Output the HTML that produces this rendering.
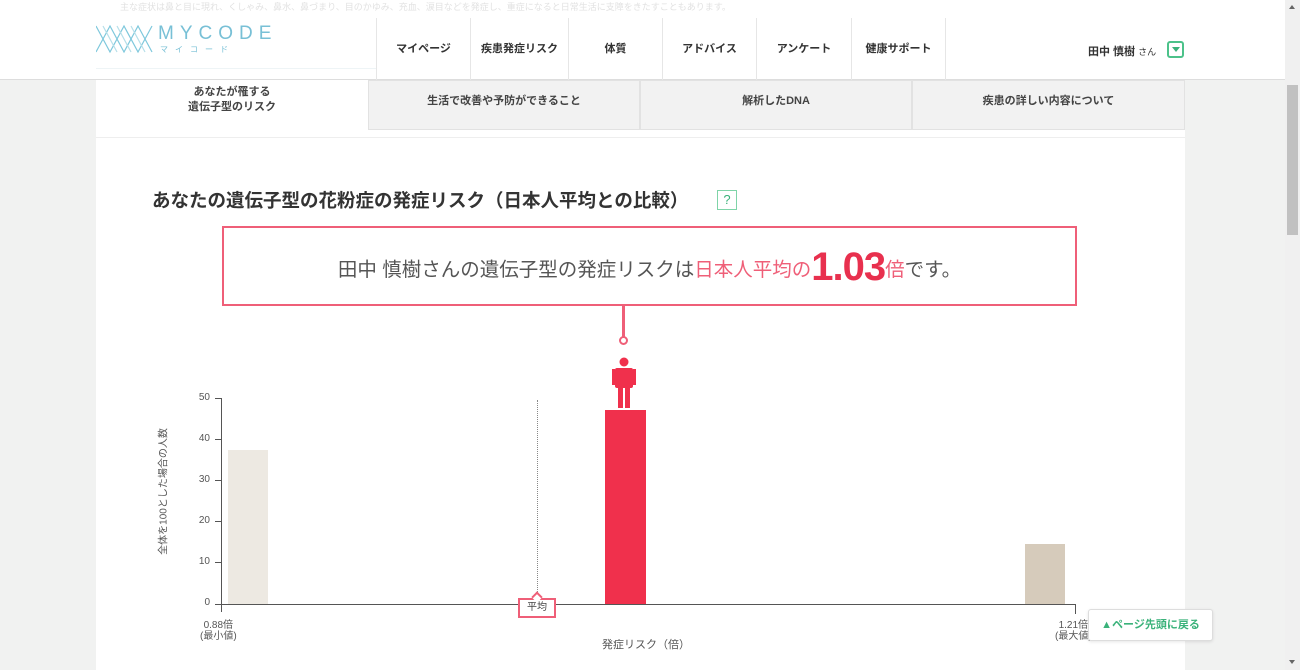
<!DOCTYPE html>
<html><head><meta charset="utf-8"><style>
*{margin:0;padding:0;box-sizing:border-box}
body{width:1300px;height:670px;overflow:hidden;background:#f1f2f1;font-family:"Liberation Sans","Noto Sans CJK JP",sans-serif;position:relative;color:#333}
.a{position:absolute}
.nav{top:18px;height:62px;border-left:1px solid #e6e6e6;font-size:11px;font-weight:bold;color:#333;display:flex;align-items:center;justify-content:center;padding-bottom:2px}
.tab{top:80px;height:50px;background:#f2f2f2;border:1px solid #e2e2e2;font-size:11px;font-weight:bold;color:#444;text-align:center;padding-top:11px}
.yl{font-size:10px;color:#555;width:20px;text-align:right}
.tk{width:6px;height:1px;background:#555;left:215px}
</style></head><body>
<div class="a" style="left:0;top:0;width:1285px;height:670px;background:#f1f2f1"></div>
<div class="a" style="left:96px;top:80px;width:1089px;height:590px;background:#fff"></div>
<!-- header -->
<div class="a" style="left:0;top:0;width:1285px;height:80px;background:#fff;border-bottom:1px solid #ddd"></div>
<div class="a" style="left:120px;top:0;font-size:9px;color:#e2e2e2;white-space:nowrap">主な症状は鼻と目に現れ、くしゃみ、鼻水、鼻づまり、目のかゆみ、充血、涙目などを発症し、重症になると日常生活に支障をきたすこともあります。</div>
<svg class="a" style="left:96px;top:24px" width="60" height="30" viewBox="0 0 60 30"><g fill="none" stroke="#7ec8dc" stroke-width="1.2"><path d="M0 2 L14 28 L28 2 L42 28 L56 2"/><path d="M0 28 L14 2 L28 28 L42 2 L56 28"/><path d="M7 2 L21 28 M21 2 L35 28 M35 2 L49 28" stroke="#b6dfe9"/></g></svg>
<div class="a" style="left:158px;top:23px;font-size:19px;letter-spacing:6px;color:#78c0d6">MYCODE</div>
<div class="a" style="left:160px;top:44px;font-size:8px;letter-spacing:7px;color:#78c0d6">マイコード</div>
<div class="a" style="left:96px;top:68px;width:280px;height:1px;background:#eef4f6"></div>
<div class="a nav" style="left:376px;width:94px">マイページ</div>
<div class="a nav" style="left:470px;width:98px">疾患発症リスク</div>
<div class="a nav" style="left:568px;width:94px">体質</div>
<div class="a nav" style="left:662px;width:94px">アドバイス</div>
<div class="a nav" style="left:756px;width:95px">アンケート</div>
<div class="a nav" style="left:851px;width:94px">健康サポート</div>
<div class="a" style="left:945px;top:18px;width:1px;height:62px;background:#e6e6e6"></div>
<div class="a" style="left:1088px;top:43px;font-size:11px;font-weight:bold">田中 慎樹 <span style="font-size:9px;font-weight:normal">さん</span></div>
<div class="a" style="left:1167px;top:41px;width:17px;height:17px;border:2px solid #4cc28a;border-radius:3px"></div>
<div class="a" style="left:1172px;top:47px;width:0;height:0;border-left:4px solid transparent;border-right:4px solid transparent;border-top:5px solid #3ab27a"></div>
<!-- tabs -->
<div class="a" style="left:96px;top:80px;width:272px;height:58px;background:#fff;font-size:11px;font-weight:bold;color:#444;text-align:center;padding-top:5px;line-height:15px">あなたが罹する<br>遺伝子型のリスク</div>
<div class="a tab" style="left:368px;width:272px">生活で改善や予防ができること</div>
<div class="a tab" style="left:640px;width:272px">解析したDNA</div>
<div class="a tab" style="left:912px;width:273px">疾患の詳しい内容について</div>
<div class="a" style="left:96px;top:137px;width:1089px;height:1px;background:#eee"></div>
<!-- title -->
<div class="a" style="left:152px;top:187px;font-size:18.5px;font-weight:bold;color:#333;white-space:nowrap">あなたの遺伝子型の花粉症の発症リスク（日本人平均との比較）</div>
<div class="a" style="left:717px;top:190px;width:20px;height:20px;border:1px solid #7fd4a8;color:#3ab27a;font-size:13px;text-align:center;line-height:18px">?</div>
<!-- box -->
<div class="a" style="left:222px;top:226px;width:855px;height:80px;border:2px solid #ef5f78;text-align:center;font-size:19.5px;color:#555;padding-top:17px;white-space:nowrap">田中 慎樹さんの遺伝子型の発症リスクは<span style="color:#ef5f78">日本人平均の</span><span style="color:#e8304e;font-size:40px;font-weight:bold;letter-spacing:-1px;vertical-align:-4px">1.03</span><span style="color:#ef5f78">倍</span>です。</div>
<div class="a" style="left:622px;top:305px;width:3px;height:32px;background:#ef5f78"></div>
<div class="a" style="left:619px;top:336px;width:9px;height:9px;border:2px solid #ef5f78;border-radius:50%;background:#fff"></div>
<svg class="a" style="left:611px;top:357px" width="26" height="52" viewBox="0 0 26 52"><g fill="#f0304c"><circle cx="13" cy="5" r="4.5"/><rect x="4" y="11" width="18" height="20" rx="2"/><rect x="1" y="12" width="3" height="16"/><rect x="22" y="12" width="3" height="16"/><rect x="7" y="30" width="5" height="21"/><rect x="14" y="30" width="5" height="21"/></g></svg>
<!-- chart -->
<div class="a" style="left:82px;top:484px;width:160px;text-align:center;transform:rotate(-90deg);font-size:10px;color:#555;white-space:nowrap">全体を100とした場合の人数</div>
<div class="a" style="left:221px;top:398px;width:1px;height:214px;background:#555"></div>
<div class="a" style="left:215px;top:604px;width:861px;height:1px;background:#555"></div>
<div class="a" style="left:1075px;top:604px;width:1px;height:10px;background:#555"></div>
<div class="a yl" style="left:190px;top:392px">50</div><div class="a tk" style="top:398px"></div>
<div class="a yl" style="left:190px;top:433px">40</div><div class="a tk" style="top:439px"></div>
<div class="a yl" style="left:190px;top:474px">30</div><div class="a tk" style="top:480px"></div>
<div class="a yl" style="left:190px;top:515px">20</div><div class="a tk" style="top:521px"></div>
<div class="a yl" style="left:190px;top:556px">10</div><div class="a tk" style="top:562px"></div>
<div class="a yl" style="left:190px;top:597px">0</div>
<div class="a" style="left:228px;top:450px;width:40px;height:154px;background:#ede9e2"></div>
<div class="a" style="left:605px;top:410px;width:41px;height:194px;background:#f0304c"></div>
<div class="a" style="left:1025px;top:544px;width:40px;height:60px;background:#d6cbbb"></div>
<div class="a" style="left:537px;top:400px;width:0;height:194px;border-left:1px dotted #888"></div>
<div class="a" style="left:518px;top:598px;width:38px;height:20px;border:2px solid #ef5f78;background:#fff;font-size:10px;text-align:center;line-height:16px;color:#444">平均</div>
<div class="a" style="left:533px;top:593px;width:8px;height:8px;border-left:2px solid #ef5f78;border-top:2px solid #ef5f78;background:#fff;transform:rotate(45deg)"></div>
<div class="a" style="left:200px;top:620px;font-size:10px;color:#555;line-height:11px;text-align:center">0.88倍<br>(最小値)</div>
<div class="a" style="left:1055px;top:620px;font-size:10px;color:#555;line-height:11px;text-align:center">1.21倍<br>(最大値)</div>
<div class="a" style="left:602px;top:636px;font-size:11px;color:#555">発症リスク（倍）</div>
<div class="a" style="left:1088px;top:609px;width:125px;height:32px;background:#fff;border:1px solid #ddd;border-radius:3px;box-shadow:0 1px 3px rgba(0,0,0,.1);color:#3ab27a;font-size:11px;font-weight:bold;text-align:center;line-height:30px">▲ページ先頭に戻る</div>
<!-- scrollbar -->
<div class="a" style="left:1285px;top:0;width:15px;height:670px;background:#f0f0f0"></div>
<div class="a" style="left:1287px;top:85px;width:11px;height:150px;background:#c1c1c1"></div>
<div class="a" style="left:1289px;top:5px;width:0;height:0;border-left:3px solid transparent;border-right:3px solid transparent;border-bottom:4px solid #666"></div>
<div class="a" style="left:1289px;top:660px;width:0;height:0;border-left:3px solid transparent;border-right:3px solid transparent;border-top:4px solid #666"></div>
</body></html>
